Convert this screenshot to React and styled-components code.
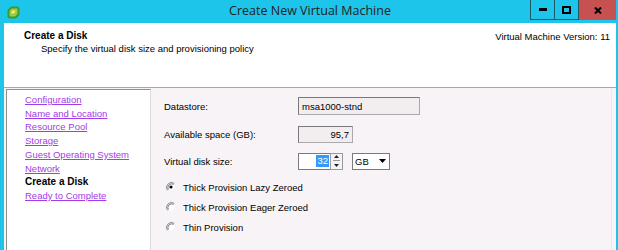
import React from 'react'
import styled, { createGlobalStyle } from 'styled-components'

const GlobalStyle = createGlobalStyle`
    html, body {
        margin: 0;
        padding: 0;
        background: #1ec5eb;
    }
    body {
        font-family: 'Liberation Sans', Arial, sans-serif;
        font-size: 9.5px;
        color: #000;
    }
`

const Window = styled.div`
    width: 618px;
    height: 250px;
    overflow: hidden;
    background: #1ec5eb;
    display: flex;
    flex-direction: column;
    padding: 0 2px 0 4px;
    box-sizing: border-box;
`

const TitleBar = styled.div`
    height: 23px;
    flex: none;
    display: flex;
    align-items: flex-start;
`

const AppIcon = styled.svg`
    margin: 6px 0 0 3px;
`

const Title = styled.div`
    flex: 1;
    text-align: center;
    font-family: 'Open Sans', 'Noto Sans', sans-serif;
    font-size: 12.5px;
    line-height: 22px;
    color: #222;
    padding-left: 70px;
`

const Controls = styled.div`
    display: flex;
    height: 20px;
`

const CtrlButton = styled.div`
    width: ${p => p.$w}px;
    height: 100%;
    box-sizing: border-box;
    display: flex;
    align-items: center;
    justify-content: center;
    background: ${p => (p.$close ? '#c75050' : 'transparent')};
    border: ${p => (p.$close ? 'none' : '1px solid #1f5866')};
    border-top: none;
    & + & {
        border-left: ${p => (p.$close ? 'none' : '0')};
    }
`

const Frame = styled.div`
    flex: 1;
    display: flex;
    flex-direction: column;
    background: #f8f3f6;
`

const Header = styled.div`
    height: 65px;
    flex: none;
    background: #fff;
    border-bottom: 1px solid #a7a7a7;
    display: flex;
    justify-content: space-between;
    box-sizing: border-box;
    padding: 7px 6px 0 20px;
`

const HeaderText = styled.div`
    display: flex;
    flex-direction: column;
`

const StepTitle = styled.div`
    font-weight: bold;
    font-size: 10px;
    line-height: 12px;
`

const StepDesc = styled.div`
    line-height: 14px;
    margin-left: 17px;
`

const Version = styled.div`
    line-height: 12px;
    margin-top: 1px;
`

const Content = styled.div`
    flex: 1;
    display: flex;
    padding-top: 1px;
`

const Nav = styled.ul`
    list-style: none;
    margin: 0 0 0 2px;
    padding: 3px 0 0 18px;
    width: 145px;
    box-sizing: border-box;
    background: #fff;
    border-top: 1px solid #8e8e8e;
    border-left: 1px solid #8e8e8e;
    border-right: 1px solid #dcdcdc;
`

const NavItem = styled.li`
    line-height: 13.7px;
    white-space: nowrap;
    color: ${p => (p.$current ? '#000' : '#a33be6')};
    font-weight: ${p => (p.$current ? 'bold' : 'normal')};
    font-size: ${p => (p.$current ? '10px' : '9.5px')};
    text-decoration: ${p => (p.$current ? 'none' : 'underline')};
`

const Panel = styled.div`
    flex: 1;
    padding: 8px 0 0 13px;
    border-right: 1px solid #ece8ea;
    margin-right: 4px;
`

const FormRow = styled.div`
    display: flex;
    align-items: center;
    height: 18px;
    margin-bottom: ${p => p.$gap}px;
`

const Label = styled.div`
    width: 134px;
    flex: none;
`

const Field = styled.div`
    width: ${p => p.$w}px;
    height: ${p => p.$h || 18}px;
    box-sizing: border-box;
    border: 1px solid #a9a9a9;
    border-top-color: #7a7a7a;
    border-left-color: #7a7a7a;
    background: #f2eef0;
    display: flex;
    align-items: center;
    justify-content: ${p => (p.$right ? 'flex-end' : 'flex-start')};
    padding: 0 3px;
`

const SpinInput = styled.div`
    width: 32px;
    height: 17px;
    box-sizing: border-box;
    border: 1px solid #7a7a7a;
    border-right: none;
    background: #fff;
    display: flex;
    align-items: center;
    justify-content: flex-end;
    padding-right: 1px;
`

const Selected = styled.span`
    background: #3399ff;
    color: #fff;
    line-height: 12px;
    padding: 0 1px;
`

const Spinner = styled.div`
    width: 13px;
    height: 17px;
    box-sizing: border-box;
    border: 1px solid #9a9a9a;
    background: #f4f4f4;
    display: flex;
    flex-direction: column;
    align-items: center;
    justify-content: space-around;
`

const Combo = styled.div`
    margin-left: 9px;
    width: 38px;
    height: 17px;
    box-sizing: border-box;
    border: 1px solid #7a7a7a;
    background: #fff;
    display: flex;
    align-items: center;
    justify-content: space-between;
    padding: 0 3px 0 2px;
`

const RadioGroup = styled.div`
    margin-top: 11px;
    display: flex;
    flex-direction: column;
    gap: 8px;
`

const RadioRow = styled.div`
    display: flex;
    align-items: center;
    height: 12px;
    gap: 6px;
    padding-left: 1px;
`

const Radio = ({ checked }) => (
    <svg width="12" height="12" viewBox="0 0 12 12">
        <circle cx="6" cy="6" r="5" fill="#fff" />
        <path d="M9.5 2.5 A5 5 0 0 0 2.5 9.5" fill="none" stroke="#8a8a8a" strokeWidth="1" />
        <path d="M8.6 3.4 A3.8 3.8 0 0 0 3.4 8.6" fill="none" stroke="#5a5a5a" strokeWidth="0.8" />
        <path d="M2.5 9.5 A5 5 0 0 0 9.5 2.5" fill="none" stroke="#f0f0f0" strokeWidth="1" />
        {checked && <circle cx="6" cy="6" r="1.6" fill="#000" />}
    </svg>
)

const navItems = [
    'Configuration',
    'Name and Location',
    'Resource Pool',
    'Storage',
    'Guest Operating System',
    'Network',
    'Create a Disk',
    'Ready to Complete',
]

const radios = ['Thick Provision Lazy Zeroed', 'Thick Provision Eager Zeroed', 'Thin Provision']

export default function App() {
    return (
        <>
            <GlobalStyle />
            <Window>
                <TitleBar>
                    <AppIcon width="13" height="13" viewBox="0 0 13 13">
                        <path d="M4 0.5 H11 L12.5 2 V9 L9 12.5 H2 L0.5 11 V4 Z" fill="#3d9a2c" />
                        <path d="M4.5 2.5 H10 L10.5 3 V8 L8 10.5 H3 L2.5 10 V5 Z" fill="#8fd04a" />
                        <path d="M5 4 H8.5 V6 L6.5 8 H4 V6 Z" fill="#e6c93a" />
                        <path d="M6 5 H7.5 V6.2 L6.3 7 H5 V6 Z" fill="#fff3a0" />
                    </AppIcon>
                    <Title>Create New Virtual Machine</Title>
                    <Controls>
                        <CtrlButton $w={25}>
                            <svg width="8" height="3"><rect width="8" height="3" fill="#000" /></svg>
                        </CtrlButton>
                        <CtrlButton $w={24}>
                            <svg width="9" height="8"><rect x="1" y="1" width="7" height="6" fill="none" stroke="#000" strokeWidth="2" /></svg>
                        </CtrlButton>
                        <CtrlButton $w={37} $close>
                            <svg width="8" height="7" viewBox="0 0 8 7">
                                <path d="M1 0.5 L7 6.5 M7 0.5 L1 6.5" stroke="#000" strokeWidth="2" />
                            </svg>
                        </CtrlButton>
                    </Controls>
                </TitleBar>
                <Frame>
                    <Header>
                        <HeaderText>
                            <StepTitle>Create a Disk</StepTitle>
                            <StepDesc>Specify the virtual disk size and provisioning policy</StepDesc>
                        </HeaderText>
                        <Version>Virtual Machine Version: 11</Version>
                    </Header>
                    <Content>
                        <Nav>
                            {navItems.map(item => (
                                <NavItem key={item} $current={item === 'Create a Disk'}>
                                    {item}
                                </NavItem>
                            ))}
                        </Nav>
                        <Panel>
                            <FormRow $gap={10}>
                                <Label>Datastore:</Label>
                                <Field $w={122}>msa1000-stnd</Field>
                            </FormRow>
                            <FormRow $gap={9}>
                                <Label>Available space (GB):</Label>
                                <Field $w={55} $h={17} $right>95,7</Field>
                            </FormRow>
                            <FormRow $gap={0}>
                                <Label>Virtual disk size:</Label>
                                <SpinInput>
                                    <Selected>32</Selected>
                                </SpinInput>
                                <Spinner>
                                    <svg width="5" height="3"><path d="M0 3 L2.5 0 L5 3 Z" fill="#222" /></svg>
                                    <svg width="7" height="1"><rect width="7" height="1" fill="#999" /></svg>
                                    <svg width="5" height="3"><path d="M0 0 L2.5 3 L5 0 Z" fill="#222" /></svg>
                                </Spinner>
                                <Combo>
                                    <span>GB</span>
                                    <svg width="7" height="4"><path d="M0 0 H7 L3.5 4 Z" fill="#000" /></svg>
                                </Combo>
                            </FormRow>
                            <RadioGroup>
                                {radios.map((r, i) => (
                                    <RadioRow key={r}>
                                        <Radio checked={i === 0} />
                                        <span>{r}</span>
                                    </RadioRow>
                                ))}
                            </RadioGroup>
                        </Panel>
                    </Content>
                </Frame>
            </Window>
        </>
    )
}
